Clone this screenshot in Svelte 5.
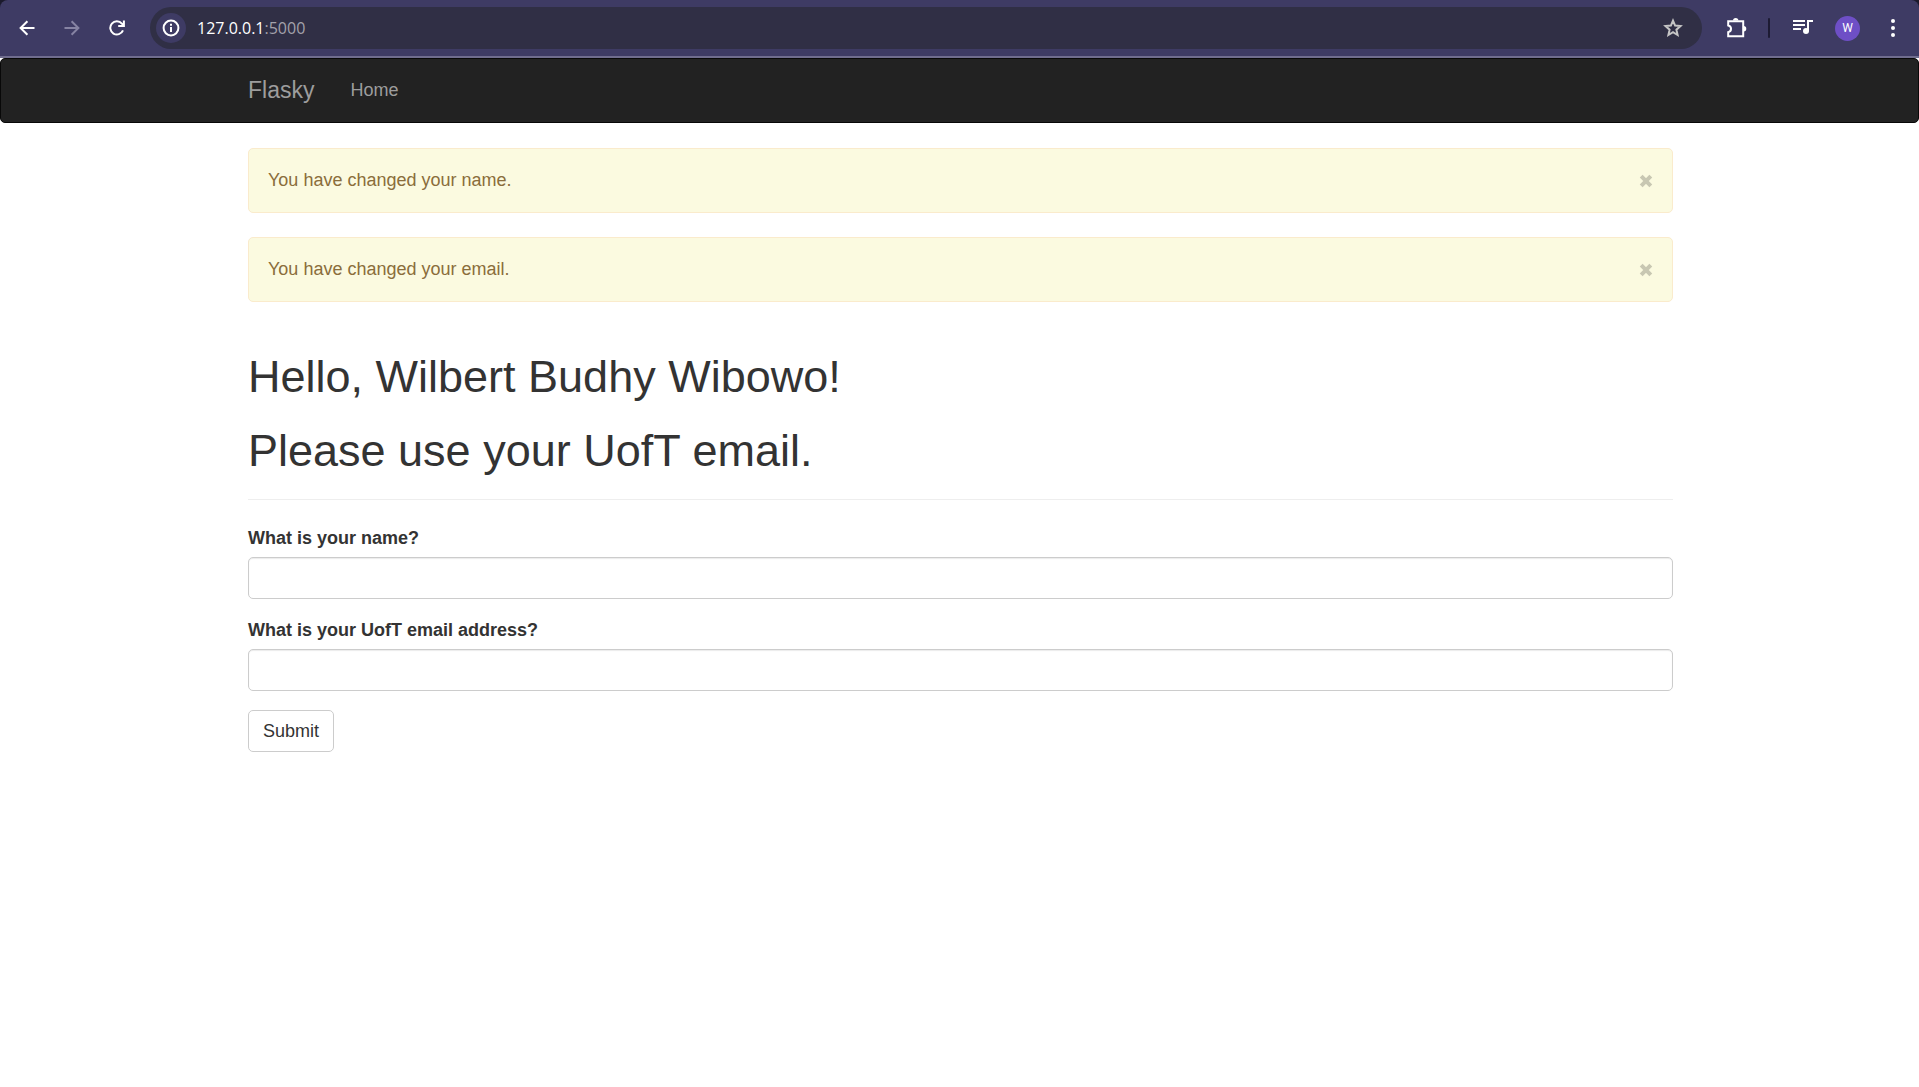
<script>
  let alerts = $state([
    { id: 1, text: 'You have changed your name.' },
    { id: 2, text: 'You have changed your email.' },
  ]);
  let name = $state('');
  let email = $state('');

  function dismiss(id) {
    alerts = alerts.filter((alert) => alert.id !== id);
  }
</script>

<div class="window">
  <header class="toolbar">
    <button class="tool" type="button" aria-label="Back">
      <svg width="16" height="16" viewBox="0 0 16 16"><path d="M15.5 8H2M8.4 1.2 1.6 8l6.8 6.8" /></svg>
    </button>
    <button class="tool dim" type="button" aria-label="Forward">
      <svg width="16" height="16" viewBox="0 0 16 16"><path d="M.5 8H14M7.6 1.2 14.4 8l-6.8 6.8" /></svg>
    </button>
    <button class="tool" type="button" aria-label="Reload">
      <svg width="16" height="16" viewBox="0 0 16 16">
        <path d="M14 10.4A6.6 6.6 0 1 1 12.9 3.6L14.4 5.4M14.9.4V6H9.2" />
      </svg>
    </button>

    <div class="address">
      <button class="site-info" type="button" aria-label="Site information">
        <svg width="18" height="18" viewBox="0 0 18 18">
          <circle cx="9" cy="9" r="7.4" />
          <path d="M9 8v5M9 4.8v2" />
        </svg>
      </button>
      <span class="url">127.0.0.1<span class="port">:5000</span></span>
      <button class="star" type="button" aria-label="Bookmark this page">
        <svg width="20" height="20" viewBox="0 0 20 20">
          <path d="m10 2.6 2.1 5 5.4.5-4.1 3.6 1.2 5.3-4.6-2.8L5.4 17l1.2-5.3L2.5 8.100l5.400-.5z" />
        </svg>
      </button>
    </div>

    <button class="tool" type="button" aria-label="Extensions">
      <svg width="22" height="22" viewBox="0 0 22 22">
        <path d="M3.200 4.200H18.200V19.200H3.200V15.200A3.400 3.400 0 0 0 3.200 8.500Z" />
        <path class="solid" d="M8 3.600a2.700 2.700 0 0 1 5.400 0zM18.600 9.100a2.700 2.700 0 0 1 0 5.400z" />
      </svg>
    </button>
    <span class="divider"></span>
    <button class="tool" type="button" aria-label="Media controls">
      <svg width="20" height="16" viewBox="0 0 20 16">
        <path d="M0 1h12M0 5h12M0 9h8M15 11V1h5" />
        <circle class="solid" cx="13" cy="11" r="3" />
      </svg>
    </button>
    <button class="tool" type="button" aria-label="Profile"><span class="avatar">W</span></button>
    <button class="tool" type="button" aria-label="Menu">
      <svg width="6" height="20" viewBox="0 0 6 20">
        <circle class="solid" cx="3" cy="3" r="2" />
        <circle class="solid" cx="3" cy="10" r="2" />
        <circle class="solid" cx="3" cy="17" r="2" />
      </svg>
    </button>
  </header>
</div>

<nav class="navbar">
  <div class="container nav-row">
    <a class="brand" href="/">Flasky</a>
    <a class="nav-link" href="/">Home</a>
  </div>
</nav>

<main class="container">
  <div class="alerts">
    {#each alerts as alert (alert.id)}
      <div class="alert" role="alert">
        <span>{alert.text}</span>
        <button class="close" type="button" aria-label="Close" onclick={() => dismiss(alert.id)}>
          <svg width="14" height="14" viewBox="0 0 14 14"><path d="m2.200 2.200 9.600 9.600M11.800 2.200l-9.600 9.600" /></svg>
        </button>
      </div>
    {/each}
  </div>

  <div class="page-header">
    <h1>Hello, Wilbert Budhy Wibowo!</h1>
    <h1>Please use your UofT email.</h1>
  </div>

  <form onsubmit={(event) => event.preventDefault()}>
    <div class="field">
      <label for="name">What is your name?</label>
      <input id="name" type="text" bind:value={name} />
    </div>
    <div class="field">
      <label for="email">What is your UofT email address?</label>
      <input id="email" type="text" bind:value={email} />
    </div>
    <button class="submit" type="submit">Submit</button>
  </form>
</main>

<style>
  :global(body) {
    margin: 0;
    background: #fff;
    color: #333;
    font: 18px/25px "Liberation Sans", Arial, sans-serif;
  }
  * {
    box-sizing: border-box;
  }
  button {
    margin: 0;
    padding: 0;
    border: 0;
    background: none;
    font: inherit;
    cursor: pointer;
  }

  .window {
    background: #1b1a2c;
  }
  .toolbar {
    display: flex;
    align-items: center;
    height: 58px;
    padding: 0 4px;
    border-bottom: 2px solid #706d8e;
    border-radius: 8px 8px 0 0;
    background: #3e3b64;
  }
  .tool {
    display: flex;
    flex: none;
    align-items: center;
    justify-content: center;
    width: 45px;
    height: 42px;
    color: #fff;
  }
  .dim {
    color: #8683a3;
  }
  svg {
    display: block;
    fill: none;
    stroke: currentColor;
    stroke-width: 2;
  }
  .solid {
    fill: currentColor;
    stroke: none;
  }
  .address {
    display: flex;
    flex: 1;
    align-items: center;
    height: 42px;
    margin: 0 11px;
    padding: 0 14px 0 6px;
    border-radius: 21px;
    background: #302f45;
  }
  .site-info {
    display: grid;
    place-items: center;
    width: 30px;
    height: 30px;
    border-radius: 50%;
    background: #3e3b64;
    color: #fff;
  }
  .url {
    flex: 1;
    margin-left: 11px;
    color: #fff;
    font: 16px/24px "Open Sans", "Noto Sans", sans-serif;
  }
  .port {
    color: #a3a2ab;
  }
  .star {
    display: grid;
    place-items: center;
    width: 30px;
    height: 30px;
    color: #c5c5c5;
  }
  .divider {
    width: 2px;
    height: 20px;
    margin: 0 10px;
    border-radius: 1px;
    background: #1d1b33;
  }
  .avatar {
    width: 25px;
    height: 25px;
    border-radius: 50%;
    background: #6e4fc6;
    font: 12px/25px Roboto, sans-serif;
    text-align: center;
  }

  .container {
    max-width: 1463px;
    margin: 0 auto;
    padding: 0 18px 0 20px;
  }
  .navbar {
    margin-bottom: 25px;
    border: 1px solid #080808;
    border-radius: 5px;
    background: #222;
  }
  .nav-row {
    display: flex;
    align-items: center;
    gap: 36px;
    height: 63px;
  }
  .brand,
  .nav-link {
    color: #9d9d9d;
    text-decoration: none;
  }
  .brand {
    font-size: 23px;
  }

  .alerts {
    display: grid;
    gap: 24px;
  }
  .alert {
    display: flex;
    align-items: center;
    justify-content: space-between;
    padding: 19px;
    border: 1px solid #faebcc;
    border-radius: 5px;
    background: #fbfae0;
    color: #8a6d3b;
  }
  .close {
    color: #000;
    opacity: 0.2;
  }
  .close svg {
    stroke-width: 4;
  }

  .page-header {
    margin: 50px 0 26px;
    padding-bottom: 11px;
    border-bottom: 1px solid #eee;
  }
  h1 {
    margin: 0 0 12px;
    font-size: 45px;
    font-weight: 400;
    line-height: 50px;
  }
  h1 + h1 {
    margin-top: 24px;
  }
  .field {
    display: grid;
    gap: 6px;
    margin-bottom: 19px;
  }
  label {
    font-weight: 700;
  }
  input {
    width: 100%;
    height: 42px;
    padding: 7px 15px;
    border: 1px solid #ccc;
    border-radius: 5px;
    background: #fff;
    box-shadow: inset 0 1px 1px rgba(0, 0, 0, 0.08);
    color: #555;
    font: inherit;
  }
  .submit {
    height: 42px;
    padding: 0 14px;
    border: 1px solid #ccc;
    border-radius: 5px;
    background: #fff;
    color: #333;
  }
</style>
